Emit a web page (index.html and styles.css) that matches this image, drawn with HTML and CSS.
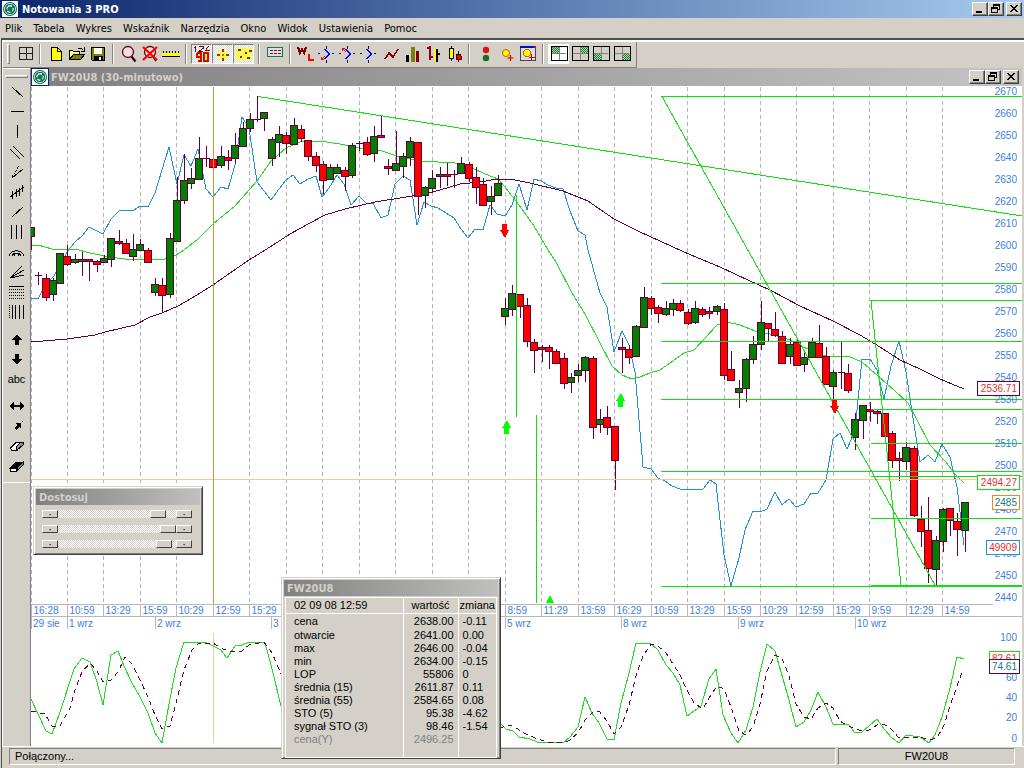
FILE: index.html
```html
<!DOCTYPE html>
<html lang="pl">
<head>
    <meta charset="UTF-8">
    <meta name="viewport" content="width=device-width, initial-scale=1.0">
    <title>Notowania 3 PRO</title>
    <link rel="stylesheet" href="styles.css">
</head>
<body>
    <!-- shared shapes -->
    <svg class="defs" width="0" height="0">
        <defs>
            <pattern id="hatch" width="2" height="2" patternUnits="userSpaceOnUse">
                <rect width="2" height="2" fill="#a8d8b0"/>
                <path d="M0 0h1v1h-1zM1 1h1v1h-1z" fill="#1f7f2f"/>
            </pattern>
            <symbol id="logo" viewBox="0 0 16 16">
                <rect width="16" height="16" fill="#fff"/>
                <circle cx="8" cy="8" r="7" fill="#0a6b50"/>
                <circle cx="8" cy="8" r="5.6" fill="none" stroke="#bfe3d6" stroke-width="1"/>
                <path d="M8 8C5 7 5 3.500 7.500 4.500C10 3 11.500 5 8 8C11 5.500 13 7.500 11.500 8.500C12 11 9.500 11.500 8 8C9.500 11 8 13 7 11.500C4.500 11.500 4 10 8 8C5 9.500 3.500 8 4.500 7C4 5.500 6 4.500 8 8Z" fill="#e8f6f0"/>
                <circle cx="8" cy="8" r="2.600" fill="#0a7a55"/>
            </symbol>
            <symbol id="min" viewBox="0 0 16 14"><rect x="4" y="9" width="6" height="2"/></symbol>
            <symbol id="restore" viewBox="0 0 16 14">
                <path d="M5.500 4.500v-2h6v5h-2M5 3h7M3.500 5.500h6v5h-6zM3 6h7" fill="none" stroke="#000"/>
            </symbol>
            <symbol id="close" viewBox="0 0 16 14">
                <path d="M4 3l7 7M5 3l7 7M11 3l-7 7M12 3l-7 7" fill="none" stroke="#000"/>
            </symbol>
            <symbol id="bracket" viewBox="0 0 18 18">
                <path d="M6 4l5 5l-5 5M7 4l5 5l-5 5" fill="none" stroke="#00f" stroke-width="1"/>
                <path d="M0 8h2v1h-2zM14 8h2v1h-2zM8 1h1v3h-1zM8 15h1v3h-1z" fill="#001050"/>
            </symbol>
            <symbol id="panes" viewBox="0 0 18 18">
                <rect x="1" y="1.500" width="16" height="14" fill="none" stroke="#000" stroke-width="1"/>
                <path d="M9 2v13M2 8.500h14" stroke="#808080"/>
            </symbol>
        </defs>
    </svg>

    <div class="window">
        <header class="titlebar">
            <svg class="logo" viewBox="0 0 16 16"><use href="#logo"/></svg>
            <h1>Notowania 3 PRO</h1>
            <div class="win-buttons">
                <button aria-label="Minimalizuj"><svg><use href="#min"/></svg></button>
                <button aria-label="Przywróć"><svg><use href="#restore"/></svg></button>
                <button class="win-close" aria-label="Zamknij"><svg><use href="#close"/></svg></button>
            </div>
        </header>

        <nav class="menu">
            <button>Plik</button>
            <button>Tabela</button>
            <button>Wykres</button>
            <button>Wskaźnik</button>
            <button>Narzędzia</button>
            <button>Okno</button>
            <button>Widok</button>
            <button>Ustawienia</button>
            <button>Pomoc</button>
        </nav>

        <div class="frame">
            <div class="toolbar-row">
                <div class="toolbar">
                    <span class="grip"></span>
                    <button aria-label="Okna"><svg viewBox="0 0 18 18"><path d="M3.500 2.500h13v12h-13zM10 3v11M4 8.500h12" fill="none" stroke="#222"/></svg></button>
                    <span class="sep"></span>
                    <button aria-label="Nowy"><svg viewBox="0 0 18 18"><path d="M4.500 2.500h6l4 4v9h-10z" fill="#ff0" stroke="#000"/><path d="M10.500 2v4.500h4" fill="none" stroke="#000"/></svg></button>
                    <button aria-label="Otwórz"><svg viewBox="0 0 18 18"><path d="M1.500 14.500v-9h3l1 1h6v3" fill="#ffff80" stroke="#000"/><path d="M1.500 14.500l4-5h11l-4 5z" fill="#808000" stroke="#000"/><path d="M10 3h3l2 2M16 2v4h-3" fill="none" stroke="#000"/></svg></button>
                    <button aria-label="Zapisz"><svg viewBox="0 0 18 18"><path d="M2.500 2.500h13v13h-12l-1-1z" fill="#808000" stroke="#000"/><rect x="5" y="3" width="8" height="6" fill="#fff"/><rect x="5" y="11" width="9" height="5"/><rect x="10" y="12" width="2" height="3" fill="#fff"/></svg></button>
                    <span class="sep"></span>
                    <button aria-label="Lupa"><svg class="smooth" viewBox="0 0 18 18"><circle cx="8" cy="7" r="5.500" fill="#f4dede" stroke="#600020" stroke-width="1.300"/><path d="M11.500 11.500l4 5" stroke="#300010" stroke-width="2.200"/></svg></button>
                    <button aria-label="Usuń lupę"><svg class="smooth" viewBox="0 0 18 18"><circle cx="9" cy="7" r="5.500" fill="#f4dede" stroke="#600020" stroke-width="1.300"/><path d="M12 11l3 5" stroke="#300010" stroke-width="2"/><path d="M2 2l14 13M16 2l-14 13" stroke="#f00" stroke-width="2.200"/></svg></button>
                    <button aria-label="Linijka"><svg viewBox="0 0 18 18"><rect y="8" width="18" height="3" fill="#ff0"/><path d="M0 11.500h18M1.500 6v2M4.500 6v2M7.500 6v2M10.500 6v2M13.500 6v2M16.500 6v2" stroke="#000"/></svg></button>
                    <span class="sep"></span>
                    <button class="pressed" aria-label="Skala"><svg viewBox="0 0 18 18"><path d="M2.500 1v6M1 2h2M6 1.500h4v2l-4 3h4M15.500 1l-3 4.500h4" fill="none" stroke="#800000"/><path d="M4 8h4v8h-3M8 12h-4v-4M11 8h4v8h-4z" fill="#ff0" stroke="#e00000" stroke-width="1.500"/></svg></button>
                    <button class="pressed" aria-label="Krzyż"><svg viewBox="0 0 18 18"><circle cx="9" cy="10" r="5" fill="#fff850"/><path d="M8 4h2v3h-2zM8 13h2v3h-2zM3 9h3v2h-3zM12 9h3v2h-3z" fill="#804000"/><rect x="8" y="9" width="2" height="2" fill="#c07000"/></svg></button>
                    <button class="pressed" aria-label="Punkty"><svg viewBox="0 0 18 18"><rect x="1" y="3" width="16" height="12" fill="#fff850"/><path d="M3 4h3v2h-3zM10 7h2v2h-2zM14 5h3v2h-3zM5 11h2v2h-2zM12 12h3v2h-3z" fill="#703000"/></svg></button>
                    <span class="sep"></span>
                    <button aria-label="Tabela danych"><svg viewBox="0 0 18 18"><rect x="1.500" y="2.500" width="15" height="9" fill="#d8e4dc" stroke="#008060"/><path d="M4 5.500h3M8 5.500h3M12 5.500h3M4 8.500h3M8 8.500h3M12 8.500h3" stroke="#900030"/></svg></button>
                    <span class="sep"></span>
                    <button aria-label="WL"><svg viewBox="0 0 18 18"><path d="M1 2l2 6l2-4l2 4l2-6" fill="none" stroke="#800000" stroke-width="2"/><path d="M12 9v6h5" fill="none" stroke="#f00" stroke-width="2"/></svg></button>
                    <button aria-label="Zakres dolny"><svg viewBox="0 0 18 18"><use href="#bracket"/><path d="M3.500 12v3M3 14.500h3M4 14l3-3" fill="none" stroke="#f00"/></svg></button>
                    <button aria-label="Zakres górny"><svg viewBox="0 0 18 18"><use href="#bracket"/><path d="M3 3h3M3.500 3v3M4 4l3 3" fill="none" stroke="#f00"/></svg></button>
                    <button aria-label="Zakres"><svg viewBox="0 0 18 18"><use href="#bracket"/></svg></button>
                    <button aria-label="Liniowy"><svg viewBox="0 0 18 18"><path d="M4 14l4-6l4 4l5-8" fill="none" stroke="#800010" stroke-width="1.500"/></svg></button>
                    <button aria-label="Słupkowy"><svg viewBox="0 0 18 18"><rect x="4" y="10" width="3" height="7"/><rect x="9" y="2" width="4" height="15" fill="#808000"/><rect x="14" y="6" width="3" height="11" fill="#800000"/></svg></button>
                    <button aria-label="Barowy"><svg viewBox="0 0 18 18"><path d="M6 1h2v14h-2zM4 2h2v2h-2zM8 11h2v2h-2z" fill="#900010"/><path d="M13 4h2v13h-2zM15 8h2v2h-2z" fill="#000"/><rect x="11" y="4" width="2" height="12" fill="#ff0"/></svg></button>
                    <button aria-label="Świecowy"><svg viewBox="0 0 18 18"><path d="M7.500 1v3M7.500 14v2M14.500 6v3M14.500 15v2" stroke="#000"/><rect x="5.500" y="3.500" width="4" height="10" fill="#ff0" stroke="#000"/><path d="M12 9h4l1 2v3h-5z" fill="#f00" stroke="#300"/></svg></button>
                    <span class="sep sep-wide"></span>
                    <button aria-label="Sygnały"><svg class="smooth" viewBox="0 0 18 18"><circle cx="9" cy="5" r="3.200" fill="#e01010"/><circle cx="9" cy="13" r="3.200" fill="#107020"/></svg></button>
                    <button aria-label="Dodaj wskaźnik"><svg class="smooth" viewBox="0 0 18 18"><circle cx="8" cy="8" r="3.500" fill="#ff0" stroke="#c06000"/><path d="M12.500 10v6M9.500 13h6" stroke="#e00000" stroke-width="1.200"/></svg></button>
                    <button aria-label="Dodaj okno"><svg viewBox="0 0 18 18"><rect x="1.500" y="1.500" width="15" height="14" fill="#dcdcdc" stroke="#445"/><rect x="1" y="1" width="16" height="2" fill="#0010c0"/><rect x="15" y="1" width="2" height="2" fill="#f00"/><circle cx="8" cy="8" r="3.500" fill="#ff0" stroke="#c06000"/><path d="M12.500 9v6M10 12h6" stroke="#e00000"/></svg></button>
                    <span class="sep"></span>
                    <button class="checked" aria-label="Panel 1"><svg viewBox="0 0 18 18"><rect x="1" y="2" width="8" height="7" fill="url(#hatch)"/><use href="#panes"/></svg></button>
                    <button aria-label="Panel 2"><svg viewBox="0 0 18 18"><rect x="9" y="2" width="8" height="7" fill="url(#hatch)"/><use href="#panes"/></svg></button>
                    <button aria-label="Panel 3"><svg viewBox="0 0 18 18"><rect x="1" y="9" width="8" height="6" fill="url(#hatch)"/><use href="#panes"/></svg></button>
                    <button aria-label="Panel 4"><svg viewBox="0 0 18 18"><rect x="9" y="9" width="8" height="6" fill="url(#hatch)"/><use href="#panes"/></svg></button>
                </div>
            </div>

            <div class="workspace">
                <aside class="tools">
                    <div class="tool-list">
                        <span class="grip-h"></span>
                        <button aria-label="Linia w dół"><svg viewBox="0 0 18 18"><path d="M4 4l11 10"/></svg></button>
                        <button aria-label="Linia pozioma"><svg viewBox="0 0 18 18"><path d="M3 8.500h13"/></svg></button>
                        <button aria-label="Linia pionowa"><svg viewBox="0 0 18 18"><path d="M9.500 2v13"/></svg></button>
                        <button aria-label="Kanał"><svg viewBox="0 0 18 18"><path d="M2 6l10 10M5 3l11 11"/></svg></button>
                        <button aria-label="Widły"><svg viewBox="0 0 18 18"><path d="M4 15l11-9"/><path d="M4 14l7-11" stroke-dasharray="2 1"/></svg></button>
                        <button aria-label="Regresja"><svg viewBox="0 0 18 18"><path d="M2 14l14-10M4.500 8v8M8.500 6v8M11.500 5v8M14.500 2v7"/></svg></button>
                        <button aria-label="Linia w górę"><svg viewBox="0 0 18 18"><path d="M4 14l11-10"/></svg></button>
                        <button aria-label="Linie pionowe"><svg viewBox="0 0 18 18"><path d="M3.500 2v14M8.500 2v14M13.500 2v14"/></svg></button>
                        <button aria-label="Łuki"><svg viewBox="0 0 18 18"><path d="M1 13a8 8 0 0 1 15 0M4 13a5 5 0 0 1 9 0M6 13a2.500 2.500 0 0 1 5 0"/></svg></button>
                        <button aria-label="Wachlarz"><svg viewBox="0 0 18 18"><path d="M2 15l12-12M2 15l14-8M2 15l14-3"/></svg></button>
                        <button aria-label="Poziomy"><svg viewBox="0 0 18 18"><path d="M1 3.500h15"/><path d="M1 6.500h15M1 9.500h15M1 12.500h15M1 15.500h15" stroke-dasharray="1 1"/></svg></button>
                        <button aria-label="Strefy"><svg viewBox="0 0 18 18"><path d="M4.500 2v14M7.500 2v14M11.500 2v14M15.500 2v14"/><path d="M1.500 2v14" stroke-dasharray="1 1"/></svg></button>
                        <button class="tool-gap" aria-label="Strzałka w górę"><svg viewBox="0 0 18 18"><path class="solid" d="M9 4l5 6h-3v5h-4v-5h-3z"/></svg></button>
                        <button aria-label="Strzałka w dół"><svg viewBox="0 0 18 18"><path class="solid" d="M9 15l5-6h-3v-5h-4v5h-3z"/></svg></button>
                        <button class="tool-text">abc</button>
                        <button class="tool-gap" aria-label="Przesuń"><svg viewBox="0 0 18 18"><path class="solid" d="M1 9l5-4v3h6v-3l5 4l-5 4v-3h-6v3z"/></svg></button>
                        <button aria-label="Wskaż"><svg viewBox="0 0 18 18"><path class="solid" d="M7 6h6v6l-2-2l-3 3l-2-2l3-3z"/><path d="M14 4.500h1"/></svg></button>
                        <button aria-label="Gumka"><svg viewBox="0 0 18 18"><path d="M2.500 11l6-6h6l-5 8h-6z" fill="#fff"/><path d="M9 13l-1-3l5-5h2v3z" fill="#909090"/></svg></button>
                        <button aria-label="Usuń wszystko"><svg viewBox="0 0 18 18"><path d="M2 11l6-6h7l-6 6z" fill="#000"/><path d="M2.500 11h6v3h-6z" fill="#fff"/><path d="M9 14v-3l6-6v3z" fill="#808080"/></svg></button>
                    </div>
                </aside>

                <section class="document">
                    <header class="titlebar titlebar-off">
                        <svg class="logo" viewBox="0 0 16 16"><use href="#logo"/></svg>
                        <h2>FW20U8 (30-minutowo)</h2>
                        <div class="win-buttons">
                            <button aria-label="Minimalizuj wykres"><svg><use href="#min"/></svg></button>
                            <button aria-label="Przywróć wykres"><svg><use href="#restore"/></svg></button>
                            <button class="win-close" aria-label="Zamknij wykres"><svg><use href="#close"/></svg></button>
                        </div>
                    </header>
                    <div class="chart">
                        <svg id="chart" viewBox="31 86 991 660" preserveAspectRatio="xMinYMin meet">
                            <g id="grid"></g>
                            <g id="averages"></g>
                            <g id="candles"></g>

                            <path class="cross" d="M31 479.500H1022M213.500 633V743"/>
                            <path class="cross-now" d="M213.500 87V604"/>

                            <!-- trend lines and retracements -->
                            <g class="trend">
                                <path d="M258 96.500L1022 216"/>
                                <path d="M1022 96.500H662L935 585"/>
                                <path d="M661 283.500H1022M661 341.500H1022M661 399.500H1022M661 471.500H1022M661 586.500H1022"/>
                                <path d="M1022 300.500H871L901 585"/>
                                <path d="M871 409.500H1022M871 443.500H1022M871 476.500H1022M871 518.500H1022M871 585.500H1022"/>
                                <path d="M516.500 195V417M536.500 415V603"/>
                            </g>
                            <path class="mark-down" d="M502 224h5v6h2l-4 8l-5-8h2z"/>
                            <path class="mark-down" d="M832 400h5v6h2l-4 8l-5-8h2z"/>
                            <path class="mark-up" d="M504 434h5v-6h2l-4-8l-5 8h2z"/>
                            <path class="mark-up" d="M618 407h5v-6h2l-4-8l-5 8h2z"/>
                            <path class="mark-up" d="M546 603l4-8l4 8z"/>

                            <g id="oscillator"></g>
                            <g id="axis"></g>
                        </svg>
                    </div>
                </section>

                <section class="float adjust">
                    <h3>Dostosuj</h3>
                    <div class="scroller">
                        <button aria-label="Mniej">·</button>
                        <input type="range" aria-label="Skala czasu" min="0" max="100" value="90">
                        <button aria-label="Więcej">·</button>
                    </div>
                    <div class="scroller">
                        <button aria-label="Mniej">·</button>
                        <input type="range" aria-label="Skala ceny" min="0" max="100" value="100">
                        <button aria-label="Więcej">·</button>
                    </div>
                    <div class="scroller">
                        <button aria-label="Mniej">·</button>
                        <input type="range" aria-label="Przesunięcie" min="0" max="100" value="96">
                        <button aria-label="Więcej">·</button>
                    </div>
                </section>

                <section class="float quote">
                    <h3>FW20U8</h3>
                    <table>
                        <thead>
                            <tr><th class="date">02 09 08 12:59</th><th>wartość</th><th>zmiana</th></tr>
                        </thead>
                        <tbody>
                            <tr><td>cena</td><td>2638.00</td><td>-0.11</td></tr>
                            <tr><td>otwarcie</td><td>2641.00</td><td>0.00</td></tr>
                            <tr><td>max</td><td>2646.00</td><td>-0.04</td></tr>
                            <tr><td>min</td><td>2634.00</td><td>-0.15</td></tr>
                            <tr><td>LOP</td><td>55806</td><td>0</td></tr>
                            <tr><td>średnia (15)</td><td>2611.87</td><td>0.11</td></tr>
                            <tr><td>średnia (55)</td><td>2584.65</td><td>0.08</td></tr>
                            <tr><td>STO (5)</td><td>95.38</td><td>-4.62</td></tr>
                            <tr><td>sygnał STO (3)</td><td>98.46</td><td>-1.54</td></tr>
                            <tr class="muted"><td>cena(Y)</td><td>2496.25</td><td></td></tr>
                        </tbody>
                    </table>
                </section>
            </div>

            <footer class="status">
                <div class="status-main">Połączony...</div>
                <div class="status-symbol">FW20U8</div>
            </footer>
        </div>
    </div>
    <script src="script.js"></script>
</body>
</html>
```

FILE: styles.css
```css
* {
    box-sizing: border-box;
}

body {
    margin: 0;
    background: #d4d0c8;
    color: #000;
    font-family: "DejaVu Sans Condensed", "DejaVu Sans", sans-serif;
    font-size: 11px;
    line-height: 13px;
}

h1, h2, h3 {
    margin: 0;
    font-size: 11px;
    font-weight: bold;
}

button {
    padding: 0;
    border: 0;
    background: none;
    color: inherit;
    font: inherit;
}

svg {
    display: block;
    shape-rendering: crispEdges;
}

.smooth, .logo {
    shape-rendering: auto;
}

.defs {
    position: absolute;
}

.window {
    display: flex;
    flex-direction: column;
    height: 100vh;
    overflow: hidden;
}

/* title bars */
.titlebar {
    display: flex;
    align-items: center;
    flex: none;
    height: 18px;
    padding: 0 2px;
    background: linear-gradient(to right, #0a246a, #a6caf0);
    color: #fff;
}

.titlebar-off {
    padding: 0 3px 0 1px;
    background: linear-gradient(to right, #808080, #c4c4c4);
    color: #d4d0c8;
}

.logo {
    width: 16px;
    height: 16px;
    margin-right: 4px;
}

.titlebar-off .logo {
    margin-right: 3px;
    outline: 1px solid #0a246a;
}

.win-buttons {
    display: flex;
    margin-left: auto;
}

.win-buttons button {
    width: 16px;
    height: 14px;
    background: #d4d0c8;
    border: 1px solid;
    border-color: #fff #404040 #404040 #fff;
    box-shadow: inset -1px -1px #808080;
}

.win-buttons svg {
    width: 16px;
    height: 14px;
    margin: -1px;
}

.win-buttons .win-close {
    margin-left: 2px;
}

/* menu */
.menu {
    display: flex;
    gap: 11px;
    flex: none;
    height: 20px;
    padding: 0 5px;
}

.frame {
    display: flex;
    flex-direction: column;
    flex: 1;
    min-height: 0;
    margin-left: 1px;
    border-top: 2px solid #505050;
    border-left: 1px solid #505050;
}

/* toolbar */
.toolbar-row {
    display: flex;
    flex: none;
    height: 28px;
    border-top: 2px solid #fff;
    border-left: 1px solid #fff;
}

.toolbar {
    display: flex;
    align-items: center;
    padding: 0 4px 2px;
    border-right: 1px solid #808080;
    border-bottom: 1px solid #808080;
}

.grip {
    width: 3px;
    height: 20px;
    margin-right: 4px;
    border: 1px solid;
    border-color: #fff #808080 #808080 #fff;
}

.sep {
    width: 2px;
    height: 20px;
    margin: 0 4px;
    border-left: 1px solid #808080;
    border-right: 1px solid #fff;
}

.sep-wide {
    margin: 0 5px;
}

.toolbar button {
    display: flex;
    align-items: center;
    justify-content: center;
    width: 21px;
    height: 20px;
}

.toolbar svg {
    width: 18px;
    height: 18px;
}

.toolbar .pressed {
    border: 1px solid;
    border-color: #808080 #fff #fff #808080;
    background: repeating-conic-gradient(#fff 0 25%, #dcd9d2 0 50%) 0 0 / 2px 2px;
}

.toolbar .checked {
    background: #fff;
}

/* work area */
.workspace {
    position: relative;
    display: flex;
    flex: 1;
    min-height: 0;
    padding-right: 2px;
}

.tools {
    flex: none;
    width: 29px;
    border-left: 1px solid #fff;
    border-right: 1px solid #808080;
}

.tool-list {
    display: flex;
    flex-direction: column;
    align-items: center;
    padding: 6px 0;
    border-top: 1px solid #fff;
    border-bottom: 1px solid #fff;
}

.grip-h {
    width: 23px;
    height: 3px;
    margin-bottom: 4px;
    border: 1px solid;
    border-color: #fff #808080 #808080 #fff;
}

.tools button {
    width: 20px;
    height: 20px;
    padding: 1px;
}

.tools svg {
    width: 18px;
    height: 18px;
    fill: none;
    stroke: #000;
}

.tools .solid {
    fill: #000;
    stroke: none;
}

.tools .tool-gap {
    margin-top: 7px;
}

.tools .tool-text {
    padding: 0;
    font-family: "Liberation Sans", Arial, sans-serif;
}

.document {
    display: flex;
    flex-direction: column;
    flex: 1;
    min-width: 0;
}

.chart {
    flex: 1;
    min-height: 0;
    background: #fff;
}

#chart {
    width: 100%;
    height: 100%;
    fill: none;
    font-family: "Liberation Sans", Arial, sans-serif;
    font-size: 10px;
}

#chart text {
    fill: #3c80e0;
}

.grid-line {
    stroke: #b4b4b4;
    stroke-dasharray: 4 3;
}

.axis-line {
    stroke: #b8b8b8;
}

.trend {
    stroke: #10e010;
}

.avg-fast {
    stroke: #20dc20;
}

.avg-slow {
    stroke: #600038;
}

.lop {
    stroke: #2090d0;
}

.signal {
    stroke: #600038;
    stroke-dasharray: 5 4;
}

.candle {
    stroke: #600038;
}

.candle-up {
    fill: #008000;
}

.candle-down {
    fill: #f00;
}

.mark-up {
    fill: #0f0;
}

.mark-down {
    fill: #f00;
}

.cross {
    stroke: #f0cc90;
}

.cross-now {
    stroke: #d89030;
}

.tag {
    fill: #fff;
    stroke-width: 1px;
}

#chart .tag-red {
    fill: #e03030;
}

#chart .tag-teal {
    fill: #207878;
}

/* floating windows */
.float {
    position: absolute;
    padding: 2px;
    background: #d4d0c8;
    border: 1px solid;
    border-color: #d4d0c8 #404040 #404040 #d4d0c8;
    box-shadow: inset 1px 1px #fff, inset -1px -1px #808080;
}

.float h3 {
    height: 16px;
    padding: 2px 3px;
    background: linear-gradient(to right, #808080, #c0c0c0);
    color: #d4d0c8;
}

.adjust {
    top: 418px;
    left: 31px;
    width: 170px;
    height: 69px;
}

.scroller {
    display: flex;
    align-items: center;
    height: 8px;
    margin: 5px 8px 7px 6px;
}

.scroller button {
    flex: none;
    width: 16px;
    height: 8px;
    background: #d4d0c8;
    border: 1px solid;
    border-color: #fff #404040 #404040 #fff;
    line-height: 5px;
}

.scroller input {
    flex: 1;
    min-width: 0;
    height: 8px;
    margin: 0;
    appearance: none;
    background: repeating-conic-gradient(#fff 0 25%, #d4d0c8 0 50%) 0 0 / 2px 2px;
}

.scroller input::-webkit-slider-thumb {
    appearance: none;
    width: 16px;
    height: 8px;
    background: #d4d0c8;
    border: 1px solid;
    border-color: #fff #404040 #404040 #fff;
}

.quote {
    top: 509px;
    left: 279px;
    width: 220px;
    height: 182px;
    font-family: "Liberation Sans", Arial, sans-serif;
}

.quote h3 {
    font-family: "DejaVu Sans Condensed", "DejaVu Sans", sans-serif;
}

.quote table {
    width: 212px;
    margin: 1px;
    border-collapse: collapse;
    border: 1px solid #fff;
}

.quote th, .quote td {
    height: 13px;
    padding: 0 4px 0 8px;
    border-left: 1px solid #fff;
    text-align: left;
    font-weight: normal;
    white-space: nowrap;
}

.quote th {
    height: 16px;
    padding: 0 1px;
    border-bottom: 1px solid #fff;
    text-align: center;
}

.quote .date {
    width: 118px;
    padding: 0 8px;
    text-align: left;
}

.quote th:nth-child(2) {
    width: 55px;
}

.quote td:nth-child(2) {
    text-align: right;
}

.quote td:nth-child(3) {
    padding: 0 4px;
}

.quote tbody tr:first-child td {
    height: 15px;
    padding-top: 1px;
}

.quote tbody tr:last-child td {
    height: 24px;
    padding-bottom: 11px;
}

.muted {
    color: #808080;
}

/* status bar */
.status {
    display: flex;
    gap: 2px;
    flex: none;
    height: 22px;
    padding: 1px 9px 3px 7px;
    border-top: 1px solid #fff;
    font-family: "Liberation Sans", Arial, sans-serif;
}

.status div {
    padding: 1px 5px;
    border: 1px solid;
    border-color: #808080 #fff #fff #808080;
}

.status-main {
    flex: 1;
}

.status-symbol {
    width: 177px;
    text-align: center;
}
```

FILE: script.js
```js
const NS = 'http://www.w3.org/2000/svg';
const left = 31;
const step = 7.295;

// [direction, body top, body bottom, wick top, wick bottom], one per 30 minutes
const candles = [
    ['u', 227, 236, 227, 250], ['u', 275, 275, 272, 285], ['d', 278, 297, 274, 301], ['u', 280, 294, 278, 301],
    ['u', 253, 283, 253, 283], ['d', 256, 264, 245, 266], ['u', 259, 262, 254, 264], ['u', 259, 261, 252, 276],
    ['d', 259, 261, 259, 281], ['d', 261, 264, 260, 272], ['u', 258, 262, 255, 262], ['u', 238, 259, 238, 267],
    ['d', 241, 243, 230, 245], ['d', 243, 253, 239, 254], ['u', 249, 256, 234, 261], ['u', 244, 250, 239, 250],
    ['d', 250, 262, 248, 262], ['u', 284, 292, 278, 296], ['d', 285, 295, 278, 312], ['u', 238, 294, 233, 298],
    ['u', 200, 241, 177, 241], ['u', 180, 200, 154, 204], ['u', 178, 183, 168, 189], ['u', 158, 179, 137, 180],
    ['u', 158, 158, 146, 167], ['d', 159, 167, 146, 170], ['u', 156, 165, 146, 168], ['d', 157, 160, 150, 170],
    ['u', 145, 158, 133, 163], ['u', 128, 146, 122, 146], ['u', 119, 128, 113, 132], ['u', 119, 119, 96, 122],
    ['u', 112, 118, 112, 131], ['u', 139, 158, 137, 166], ['u', 134, 142, 126, 157], ['d', 135, 143, 132, 154],
    ['u', 125, 144, 118, 144], ['d', 129, 138, 125, 142], ['d', 140, 156, 140, 161], ['d', 156, 165, 152, 172],
    ['d', 164, 180, 161, 194], ['u', 167, 179, 164, 180], ['u', 167, 173, 164, 174], ['d', 170, 176, 167, 191],
    ['u', 145, 175, 143, 178], ['u', 143, 143, 141, 151], ['d', 142, 154, 137, 156], ['u', 136, 153, 126, 162],
    ['d', 135, 137, 115, 138], ['d', 166, 168, 159, 175], ['u', 163, 170, 131, 171], ['u', 156, 166, 153, 178],
    ['u', 141, 157, 137, 166], ['d', 142, 196, 142, 215], ['u', 187, 195, 186, 208], ['u', 178, 188, 170, 191],
    ['u', 174, 176, 167, 188], ['d', 174, 176, 163, 186], ['u', 174, 174, 170, 188], ['u', 163, 173, 157, 173],
    ['d', 164, 178, 162, 182], ['d', 177, 187, 167, 204], ['d', 184, 205, 178, 206], ['u', 196, 201, 186, 215],
    ['u', 183, 195, 175, 195], ['u', 308, 316, 298, 325], ['u', 293, 309, 285, 316], ['d', 294, 306, 294, 318],
    ['d', 305, 341, 298, 347], ['d', 342, 350, 339, 373], ['d', 347, 349, 345, 362], ['d', 347, 351, 345, 369],
    ['d', 351, 363, 349, 363], ['d', 358, 383, 353, 389], ['u', 377, 382, 373, 393], ['u', 370, 375, 364, 382],
    ['u', 357, 370, 356, 382], ['d', 358, 427, 356, 439], ['u', 419, 424, 409, 433], ['d', 417, 427, 406, 435],
    ['d', 426, 460, 426, 490], ['d', 347, 349, 338, 373], ['d', 349, 357, 345, 364], ['u', 326, 356, 325, 357],
    ['u', 297, 327, 287, 327], ['d', 298, 308, 296, 315], ['d', 307, 313, 305, 323], ['u', 308, 314, 301, 316],
    ['u', 303, 309, 299, 316], ['d', 303, 310, 300, 312], ['d', 312, 323, 309, 325], ['u', 308, 322, 301, 324],
    ['d', 309, 314, 307, 317], ['d', 311, 313, 307, 319], ['u', 306, 311, 305, 315], ['d', 309, 375, 303, 380],
    ['d', 369, 380, 351, 380], ['u', 388, 392, 380, 408], ['u', 359, 388, 358, 402], ['u', 344, 359, 336, 364],
    ['u', 322, 344, 301, 350], ['d', 323, 328, 323, 341], ['d', 329, 335, 312, 337], ['d', 336, 363, 331, 363],
    ['u', 344, 356, 338, 364], ['d', 342, 365, 339, 365], ['u', 357, 364, 353, 372], ['u', 342, 357, 338, 357],
    ['d', 343, 357, 325, 357], ['d', 356, 384, 347, 385], ['u', 372, 386, 370, 399], ['u', 372, 372, 342, 389],
    ['d', 373, 390, 364, 393], ['u', 419, 437, 413, 450], ['u', 405, 420, 405, 439], ['d', 409, 411, 402, 422],
    ['d', 411, 413, 410, 424], ['d', 413, 436, 413, 436], ['d', 433, 460, 431, 468], ['d', 458, 460, 452, 481],
    ['u', 447, 461, 442, 470], ['d', 448, 515, 446, 517], ['d', 519, 531, 506, 547], ['d', 530, 568, 497, 583],
    ['u', 540, 569, 536, 585], ['u', 509, 541, 508, 552], ['d', 508, 520, 508, 536], ['d', 521, 529, 513, 556],
    ['u', 502, 530, 502, 552]
];

const lop = '31,298 38,299 45,285 54,276 67,252 75,242 82,236 89,227 103,234 111,219 119,211 134,210 140,206 148,207 155,193 162,170 169,147 177,184 184,155 191,166 198,149 206,189 213,197 221,187 228,189 235,165 242,117 249,128 257,182 264,191 271,200 279,189 286,180 293,175 300,184 308,179 316,176 322,197 329,188 337,175 344,184 351,205 359,196 366,203 373,203 381,218 388,215 395,184 403,176 410,180 417,225 424,202 431,206 438,208 446,213 454,218 461,229 468,238 475,229 483,230 490,205 497,214 505,216 512,205 519,184 527,210 534,179 541,181 548,185 556,188 563,189 570,211 578,231 585,235 588,250 600,293 607,307 614,352 622,331 629,345 635,372 643,467 651,469 658,478 665,481 672,486 680,489 703,489 710,480 716,484 724,555 731,586 739,558 745,530 753,511 760,512 767,509 775,492 782,505 789,499 796,507 804,504 811,493 818,493 826,480 833,439 840,433 847,449 855,431 862,359 870,359 877,370 884,399 891,366 899,341 906,372 913,418 920,462 928,455 935,462 942,444 950,457 957,487 964,545';
const avgFast = '31,245 38,245 52,249 75,249 90,253 110,257 132,260 148,259 165,259 176,255 184,250 198,239 213,224 235,206 257,181 271,161 286,148 300,142 320,141 340,144 359,148 382,151 400,157 420,161 455,163 470,167 485,174 498,179 505,187 519,205 534,226 548,250 556,262 572,293 585,314 600,343 612,366 622,375 632,379 640,377 650,373 660,370 670,363 684,353 694,350 705,338 717,325 727,322 740,325 755,331 770,334 790,340 803,347 815,352 826,356 848,356 862,362 878,376 895,391 908,403 915,416 930,445 945,461 955,474 964,483';
const avgSlow = '31,342 67,339 95,335 105,332 135,325 150,317 162,313 178,306 192,298 213,285 230,273 249,260 270,247 290,234 310,223 325,215 345,209 375,202 400,198 425,194 440,190 460,184 480,182 497,179 515,180 530,183 563,191 588,201 614,219 640,232 660,241 684,252 720,267 750,281 770,290 800,306 833,321 860,335 880,347 900,360 920,369 940,379 964,389';

// the stretch under the quote window is left out
const sto = [
    '31,699 46,731 52,734 60,712 74,669 82,658 90,662 97,682 103,705 111,655 118,651 124,666 132,683 140,697 148,713 155,733 162,743 169,704 176,668 184,642 205,642 213,646 221,650 227,658 235,646 242,645 249,642 265,643 271,665 283,714',
    '499,722 506,729 513,731 519,737 530,739 537,742 563,743 570,737 578,727 585,697 592,713 599,723 607,739 614,740 621,703 629,673 636,643 650,643 658,650 666,665 673,673 680,685 687,716 701,706 709,679 716,669 723,715 731,733 738,743 746,730 753,707 760,672 767,644 775,651 789,700 796,727 804,722 811,710 818,692 826,707 833,724 840,725 848,724 855,733 862,732 877,719 884,729 892,738 899,743 906,735 920,737 929,743 935,735 942,717 950,688 957,657 964,659'
];
const signal = [
    '31,711 45,714 52,726 60,726 70,708 75,690 82,672 90,663 97,671 103,682 111,680 118,672 125,657 132,664 140,680 148,697 155,715 162,729 170,726 176,703 184,670 192,650 199,643 213,643 221,648 228,651 242,651 249,645 264,642 272,653 283,678',
    '499,728 512,725 522,732 537,739 548,742 563,743 570,740 578,733 585,720 592,713 599,711 607,721 614,734 621,727 629,705 636,676 643,656 651,644 658,646 666,653 673,664 680,675 687,690 694,703 703,709 709,698 717,686 724,689 731,707 739,731 746,735 753,727 760,704 767,671 775,655 782,658 789,676 796,704 804,717 811,719 818,708 826,703 833,708 840,721 848,726 862,731 869,730 877,725 884,724 892,730 899,738 920,737 929,740 937,738 944,725 950,706 957,686 963,670'
];

const times = ['16:28', '10:59', '13:29', '15:59', '10:29', '12:59', '15:29', '', '', '', '', '', '',
    '8:59', '11:29', '13:59', '16:29', '10:59', '13:29', '15:59', '10:29', '12:59', '15:29', '9:59', '12:29', '14:59'];
const days = [[31, '29 sie'], [67, '1 wrz'], [155, '2 wrz'], [271, '3'], [505, '5 wrz'], [621, '8 wrz'], [738, '9 wrz'], [855, '10 wrz']];

function draw(parent, name, attrs, text) {
    const el = document.createElementNS(NS, name);
    for (const key in attrs) el.setAttribute(key, attrs[key]);
    if (text) el.textContent = text;
    document.getElementById(parent).appendChild(el);
}

function label(x, y, text, anchor = 'start', cls = '') {
    draw('axis', 'text', { x, y, 'text-anchor': anchor, class: cls }, text);
}

function tag(y, width, text, color, cls) {
    draw('axis', 'rect', { x: 1019.5 - width, y: y - 7.5, width, height: 14, class: 'tag', stroke: color });
    label(1017, y + 3, text, 'end', cls);
}

// candles
candles.forEach(([dir, top, bottom, high, low], i) => {
    const x = Math.round(left + step * i);
    draw('candles', 'path', { d: `M${x + 0.5} ${high}V${low}`, class: 'candle' });
    if (top === bottom) {
        draw('candles', 'path', { d: `M${x - 3} ${top + 0.5}h7`, class: 'candle' });
    } else {
        draw('candles', 'rect', {
            x: x - 3.5, y: top + 0.5, width: 7, height: bottom - top,
            class: dir === 'u' ? 'candle candle-up' : 'candle candle-down'
        });
    }
});

draw('averages', 'polyline', { points: lop, class: 'lop' });
draw('averages', 'polyline', { points: avgFast, class: 'avg-fast' });
draw('averages', 'polyline', { points: avgSlow, class: 'avg-slow' });
sto.forEach(points => draw('oscillator', 'polyline', { points, class: 'avg-fast' }));
signal.forEach(points => draw('oscillator', 'polyline', { points, class: 'signal' }));

// time axis
draw('axis', 'path', { d: 'M31 604.5H993M31 616.5H1022', class: 'axis-line' });
times.forEach((time, i) => {
    const x = Math.floor(left + step * 5 * i) + 0.5;
    draw('grid', 'path', { d: `M${x} 87V604`, class: 'grid-line' });
    draw('axis', 'path', { d: `M${x} 604V616`, class: 'axis-line' });
    label(x + 2, 614, time);
});
days.forEach(([x, day]) => {
    draw('axis', 'path', { d: `M${x + 0.5} 616V629`, class: 'axis-line' });
    label(x + 2, 627, day);
});

// price and oscillator scales
for (let price = 2670, y = 95; price >= 2440; price -= 10, y += 22) {
    label(1017, y, String(price), 'end');
}
[[100, 641], [60, 681], [40, 701], [20, 721], [0, 742]].forEach(([value, y]) => label(1017, y, String(value), 'end'));

tag(389, 42, '2536.71', '#600038', 'tag-red');
tag(483, 42, '2494.27', '#10e010', 'tag-red');
tag(503, 27, '2485', '#e09020', 'tag-teal');
tag(548, 33, '49909', '#2090d0', 'tag-red');
tag(659, 30, '82.61', '#10e010', 'tag-red');
tag(667, 30, '74.61', '#600038', 'tag-teal');
```
